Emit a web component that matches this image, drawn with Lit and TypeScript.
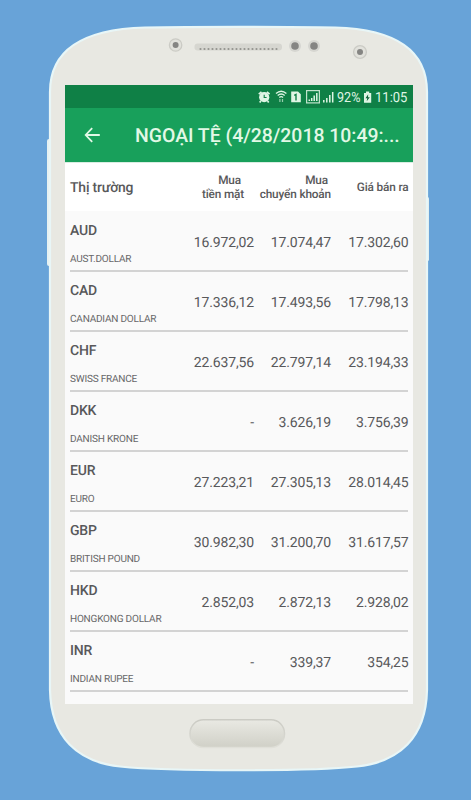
import { LitElement, html, css, svg } from "lit";
import { customElement } from "lit/decorators.js";

interface Rate {
  code: string;
  name: string;
  cash: string;
  transfer: string;
  sell: string;
}

const RATES: Rate[] = [
  { code: "AUD", name: "AUST.DOLLAR", cash: "16.972,02", transfer: "17.074,47", sell: "17.302,60" },
  { code: "CAD", name: "CANADIAN DOLLAR", cash: "17.336,12", transfer: "17.493,56", sell: "17.798,13" },
  { code: "CHF", name: "SWISS FRANCE", cash: "22.637,56", transfer: "22.797,14", sell: "23.194,33" },
  { code: "DKK", name: "DANISH KRONE", cash: "-", transfer: "3.626,19", sell: "3.756,39" },
  { code: "EUR", name: "EURO", cash: "27.223,21", transfer: "27.305,13", sell: "28.014,45" },
  { code: "GBP", name: "BRITISH POUND", cash: "30.982,30", transfer: "31.200,70", sell: "31.617,57" },
  { code: "HKD", name: "HONGKONG DOLLAR", cash: "2.852,03", transfer: "2.872,13", sell: "2.928,02" },
  { code: "INR", name: "INDIAN RUPEE", cash: "-", transfer: "339,37", sell: "354,25" },
];

@customElement("phone-frame")
export class PhoneFrame extends LitElement {
  static styles = css`
    :host {
      display: block;
      position: relative;
      width: 471px;
      height: 800px;
    }
    .body {
      position: absolute;
      inset: 0;
    }
    .screen {
      position: relative;
      box-sizing: border-box;
      padding: 85px 58px 96px 65px;
      height: 800px;
    }
  `;

  render() {
    const holes = Array.from({ length: 20 }, (_, i) => 200.5 + i * 4);
    return html`
      <svg class="body" width="471" height="800" viewBox="0 0 471 800">
        <defs>
          <linearGradient id="home" x1="0" y1="0" x2="0" y2="1">
            <stop offset="0" stop-color="#e9e9e3" />
            <stop offset="1" stop-color="#d0d0c7" />
          </linearGradient>
          <linearGradient id="rim" x1="0" y1="0" x2="0" y2="1">
            <stop offset="0" stop-color="#cbcbc4" />
            <stop offset="0.6" stop-color="#d6d6cf" />
            <stop offset="1" stop-color="#e0e0d9" />
          </linearGradient>
        </defs>
        <rect x="47" y="139" width="6" height="127" rx="2" fill="#e6f1f1" />
        <rect x="424" y="197" width="5" height="64" rx="1.5" fill="#e3eeee" />
        <path
          d="M145 27.5 C190 26.6 290 26.6 335 27.5 C388 29 427 46 427 92 V690 C426 738 399 762 357 766.5 C310 771.5 170 771.5 120 766.5 C78 762 51 738 50 690 V92 C50 46 90 29 145 27.5 Z"
          fill="#e8e8e2" stroke="#e8f6f7" stroke-width="2.2" />
        <g fill="#e2e2dc" stroke="#cbcbc5" stroke-width="1.3">
          <circle cx="175.6" cy="45" r="6.2" />
          <circle cx="360" cy="52" r="6.4" />
        </g>
        <g fill="#d6d6d1">
          <circle cx="295" cy="46" r="6" />
          <circle cx="314" cy="46" r="6" />
        </g>
        <g fill="#858583">
          <circle cx="175.6" cy="45" r="3" />
          <circle cx="360" cy="52" r="3" />
          <circle cx="295" cy="46" r="3.8" />
          <circle cx="314" cy="46" r="3.8" />
        </g>
        <rect x="194.5" y="43.5" width="87.5" height="7" rx="3.2" fill="#d6d6d0" />
        ${holes.map((x) => svg`<circle cx=${x} cy="49" r="1.1" fill="#94948f" />`)}
        <rect x="190" y="719.8" width="94.5" height="27.7" rx="13.5" fill="url(#home)" stroke="url(#rim)" stroke-width="1.5" />
      </svg>
      <div class="screen"><slot></slot></div>
    `;
  }
}

@customElement("status-bar")
export class StatusBar extends LitElement {
  static styles = css`
    :host {
      display: flex;
      justify-content: flex-end;
      align-items: center;
      height: 23px;
      box-sizing: border-box;
      padding-right: 5px;
      background: #0f8046;
      color: #dff5e4;
      font: 14px/23px Roboto, sans-serif;
    }
    .icons {
      flex: none;
      margin-right: 3px;
    }
    .battery {
      flex: none;
      margin: 0 3px 0 2px;
    }
    .text {
      flex: none;
      padding-top: 3px;
      white-space: nowrap;
      transform-origin: left;
    }
    .percent {
      width: 24px;
      transform: scaleX(0.9);
    }
    .clock {
      width: 33px;
      transform: scaleX(0.93);
    }
  `;

  render() {
    return html`
      <svg class="icons" width="77" height="23" viewBox="257 85 77 23" fill="none" stroke="#dff5e4">
        <circle cx="264.2" cy="97.2" r="5.1" fill="#dff5e4" stroke="none" />
        <path d="M258.8 94.2 L261.5 91.9 M266.9 91.9 L269.6 94.2 M260.8 101 L259.7 102.5 M267.6 101 L268.7 102.5" stroke-width="1.7" />
        <path d="M264.2 94.8 V97.5 H266.6" stroke="#0f8046" stroke-width="1.1" />
        <path d="M276 93.6 Q281.2 88.8 286.4 93.6 M277.7 95.6 Q281.2 92.5 284.7 95.6 M279.3 97.5 Q281.2 95.9 283.1 97.5" stroke-width="1.3" />
        <path d="M279.9 99 V102 M282.5 99 V102" stroke-width="1.2" opacity="0.65" />
        <path d="M291.2 91.5 H298 L300.8 94.3 V102.3 H291.2 Z" fill="#dff5e4" stroke="none" />
        <path d="M294.2 95.3 L296 94.4 V100.4" stroke="#0f8046" stroke-width="1.4" />
        <rect x="306.6" y="90.6" width="12.8" height="12.3" stroke-width="1.2" opacity="0.85" />
        <path d="M309.3 99.5 V101 M311.7 98 V101 M314.2 95.5 V101 M316.8 93 V101" stroke-width="1.5" />
        <path d="M323.8 100 V102.5 M326.8 98 V102.5 M329.8 95 V102.5 M332.7 92 V102.5" stroke-width="1.5" />
      </svg>
      <span class="text percent">92%</span>
      <svg class="battery" width="9" height="23" viewBox="363 85 9 23">
        <path d="M364 93 H366 V91.5 H369.2 V93 H371.2 V102.7 H364 Z" fill="#dff5e4" />
        <path d="M368.2 94.3 L365.5 98.3 H367.3 L366.7 101.2 L369.8 97.2 H368 Z" fill="#0f6038" />
      </svg>
      <span class="text clock">11:05</span>
    `;
  }
}

@customElement("app-root")
export class AppRoot extends LitElement {
  static styles = css`
    :host {
      display: block;
      width: 471px;
      height: 800px;
      overflow: hidden;
      background: #68a3d8;
      font-family: Roboto, sans-serif;
      color: #58585a;
      text-rendering: geometricPrecision;
    }
    .app {
      height: 619px;
      overflow: hidden;
      background: #fafafa;
    }
    .bar {
      display: flex;
      align-items: center;
      height: 54px;
      box-sizing: border-box;
      padding: 0 14px 0 19px;
      background: #18a05b;
      color: #e2f8e6;
    }
    .back {
      flex: none;
      margin-right: 35px;
    }
    .title {
      font-size: 19.4px;
      font-weight: 500;
      line-height: 54px;
      white-space: nowrap;
      padding-top: 2px;
    }
    .head,
    .row {
      display: grid;
      grid-template-columns: 110px 74px 77px 77.5px;
      margin: 0 5px;
      align-items: center;
      text-align: right;
    }
    .headwrap {
      background: #ffffff;
      border-top: 1px solid #d9ede2;
    }
    .head {
      height: 48px;
      font-size: 11.8px;
      font-weight: 500;
      line-height: 13.5px;
      letter-spacing: -0.15px;
    }
    .market {
      text-align: left;
      font-size: 13.9px;
      letter-spacing: -0.15px;
      padding-top: 3px;
    }
    .sell {
      padding-top: 1px;
    }
    .two span {
      display: block;
    }
    .two {
      padding-top: 1px;
    }
    .two .first {
      padding-right: 3px;
    }
    .two.cash {
      padding-right: 10px;
    }
    .list {
      padding-top: 1px;
    }
    .row {
      height: 60px;
      box-sizing: border-box;
      border-bottom: 2px solid #d3d3d3;
      font-size: 14px;
      line-height: 16px;
      letter-spacing: -0.15px;
      white-space: nowrap;
    }
    .label {
      text-align: left;
    }
    .code {
      font-size: 14px;
      font-weight: 500;
      margin-top: 8px;
      letter-spacing: -0.2px;
    }
    .name {
      font-size: 10px;
      margin-top: 13px;
      letter-spacing: -0.2px;
      color: #666668;
    }
    .value {
      padding-top: 4px;
    }
  `;

  render() {
    return html`
      <phone-frame>
        <div class="app">
          <status-bar></status-bar>
          <div class="bar">
            <svg class="back" width="16" height="16" viewBox="0 0 16 16" fill="none" stroke="#e2f8e6" stroke-width="1.8">
              <path d="M8.2 1.2 L1.7 8 L8.2 14.8 M1.7 8 H15.8" />
            </svg>
            <div class="title">NGOẠI TỆ (4/28/2018 10:49:...</div>
          </div>
          <div class="headwrap">
            <div class="head">
              <div class="market">Thị trường</div>
              <div class="two cash"><span class="first">Mua</span><span>tiền mặt</span></div>
              <div class="two"><span class="first">Mua</span><span>chuyển khoản</span></div>
              <div class="sell">Giá bán ra</div>
            </div>
          </div>
          <div class="list">
            ${RATES.map(
              (r) => html`
                <div class="row">
                  <div class="label">
                    <div class="code">${r.code}</div>
                    <div class="name">${r.name}</div>
                  </div>
                  <div class="value">${r.cash}</div>
                  <div class="value">${r.transfer}</div>
                  <div class="value">${r.sell}</div>
                </div>
              `
            )}
          </div>
        </div>
      </phone-frame>
    `;
  }
}
